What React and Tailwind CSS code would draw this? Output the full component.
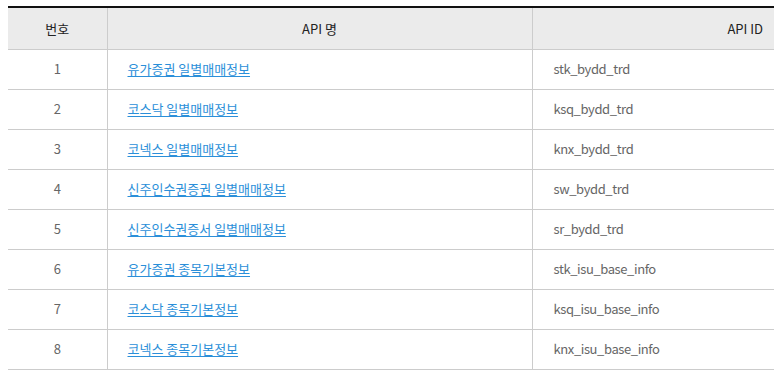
import React from 'react';

const rows = [
    { no: 1, name: '유가증권 일별매매정보', id: 'stk_bydd_trd' },
    { no: 2, name: '코스닥 일별매매정보', id: 'ksq_bydd_trd' },
    { no: 3, name: '코넥스 일별매매정보', id: 'knx_bydd_trd' },
    { no: 4, name: '신주인수권증권 일별매매정보', id: 'sw_bydd_trd' },
    { no: 5, name: '신주인수권증서 일별매매정보', id: 'sr_bydd_trd' },
    { no: 6, name: '유가증권 종목기본정보', id: 'stk_isu_base_info' },
    { no: 7, name: '코스닥 종목기본정보', id: 'ksq_isu_base_info' },
    { no: 8, name: '코넥스 종목기본정보', id: 'knx_isu_base_info' },
];

const App = () => {
    return (
        <div
            className="w-[774px] h-[386px] bg-white overflow-hidden pt-[6px] pl-[8px]"
            style={{ fontFamily: '"Noto Sans CJK KR", "Noto Sans", sans-serif' }}
        >
            <table className="w-[950px] border-collapse table-fixed text-[13px]">
                <colgroup>
                    <col className="w-[99px]" />
                    <col className="w-[425px]" />
                    <col className="w-[426px]" />
                </colgroup>
                <thead>
                    <tr className="h-[42px] bg-[#ebebeb] border-t-2 border-[#111] border-b border-b-[#cccccc]">
                        <th className="font-normal text-[#222] text-center border-r border-[#cccccc]">번호</th>
                        <th className="font-normal text-[#222] text-center border-r border-[#cccccc]">API 명</th>
                        <th className="font-normal text-[#222] text-center">API ID</th>
                    </tr>
                </thead>
                <tbody>
                    {rows.map((row) => (
                        <tr key={row.no} className="h-[40px] border-b border-[#cccccc]">
                            <td className="text-center text-[#666] border-r border-[#cccccc]">{row.no}</td>
                            <td className="px-[20px] border-r border-[#cccccc]">
                                <a href="#" className="text-[#2b8fd9] underline underline-offset-2">
                                    {row.name}
                                </a>
                            </td>
                            <td className="px-[21px] text-[#666] tracking-[-0.4px]">{row.id}</td>
                        </tr>
                    ))}
                </tbody>
            </table>
        </div>
    );
};

export default App;
